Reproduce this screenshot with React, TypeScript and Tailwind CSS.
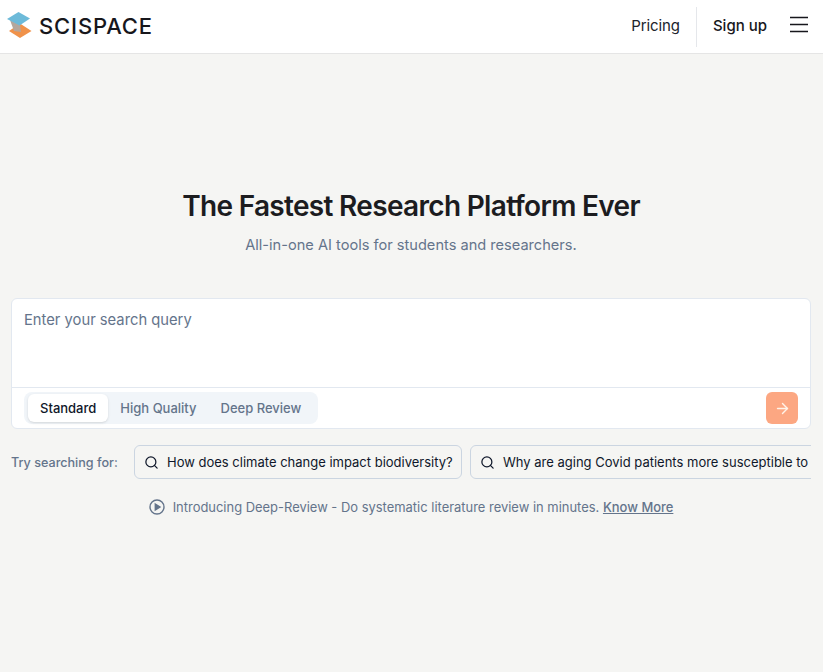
import { ArrowRight, Search } from "lucide-react";

const chips = [
  { text: "How does climate change impact biodiversity?", width: "w-[328px]" },
  { text: "Why are aging Covid patients more susceptible to", width: "w-[420px]" },
];

function Logo() {
  return (
    <svg width="25" height="27" viewBox="0 0 25 27" className="shrink-0 mb-[2px]">
      <path d="M13 11.5 L24.5 19 L13 26 L2 19 Z" fill="#f0924a" />
      <path d="M3 8 L13 13 L14 20 L7 19 Z" fill="#b5a79d" />
      <path d="M11.5 0 L23 6.5 L12.5 13.5 L0 7 Z" fill="#6dbad9" />
    </svg>
  );
}

export default function App() {
  return (
    <div className="min-h-[672px] bg-[#f5f5f3] font-['Inter','Liberation_Sans',sans-serif] overflow-hidden">
      <header className="h-[54px] bg-white border-b border-[#e5e5e5] flex items-center pl-[7px] pr-[15px]">
        <Logo />
        <span className="ml-[7px] text-[22px] font-medium tracking-[0.85px] text-[#17171c]">SCISPACE</span>
        <div className="ml-auto flex items-center h-full">
          <a className="text-[15px] tracking-[-0.1px] text-[#20242c] mr-4">Pricing</a>
          <div className="w-px h-10 bg-[#e5e7eb]" />
          <a className="text-[15px] font-medium text-[#17171c] ml-4 mr-[23px]">Sign up</a>
          <svg width="18" height="17" viewBox="0 0 18 17" fill="none" stroke="#17171c" strokeWidth="1.6" className="mb-[4px]">
            <path d="M0 1.5 H18 M0 8.5 H18 M0 15.5 H18" />
          </svg>
        </div>
      </header>

      <main className="pt-[132px] pl-[11px] pr-[12px]">
        <h1 className="text-center text-[28px] leading-10 font-semibold text-[#1c1c1f] tracking-[-0.68px]">
          The Fastest Research Platform Ever
        </h1>
        <p className="mt-[9px] text-center text-[14.6px] leading-5 text-[#64748b]">
          All-in-one AI tools for students and researchers.
        </p>

        <div className="mt-[43px] bg-white border border-[#e2e8f0] rounded-md">
          <div className="h-[88px] px-3 pt-[11px] text-[14.75px] leading-5 text-[#64748b]">Enter your search query</div>
          <div className="h-[41px] border-t border-[#e2e8f0] flex items-center justify-between pl-[12px] pr-[12px]">
            <div className="h-8 bg-[#f1f5f9] rounded-lg flex items-center pl-[4px] pr-[5px] text-[13px]">
              <span className="h-[28px] px-3 pt-px flex items-center bg-white rounded-md shadow-sm text-[#0f172a] font-medium">Standard</span>
              <span className="px-3 pt-[2px] text-[#64748b] font-medium">High Quality</span>
              <span className="px-3 pt-[2px] text-[#64748b] font-medium">Deep Review</span>
            </div>
            <button className="w-8 h-8 rounded-md bg-[#fca782] flex items-center justify-center">
              <ArrowRight className="w-[17px] h-[17px] text-[#fff3e8]" />
            </button>
          </div>
        </div>

        <div className="mt-4 flex items-center overflow-hidden w-[800px]">
          <span className="shrink-0 w-[123px] text-[12.6px] pt-[3px] font-medium text-[#64748b]">Try searching for:</span>
          <div className="flex gap-2">
            {chips.map((c) => (
              <div key={c.text} className={`${c.width} shrink-0 h-[34px] flex items-center gap-[8px] pl-[9px] rounded-md border border-[#cbd5e1] whitespace-nowrap`}>
                <Search className="w-[15px] h-[15px] text-[#0f172a] shrink-0" />
                <span className="text-[13px] pt-px text-[#0f172a]">{c.text}</span>
              </div>
            ))}
          </div>
        </div>

        <div className="mt-[18px] flex items-center justify-center gap-2 text-[12.95px] text-[#64748b]">
          <svg width="16" height="16" viewBox="0 0 16 16" fill="none" stroke="#64748b" strokeWidth="1.4">
            <circle cx="8" cy="8" r="7" />
            <path d="M6.3 5 L11 8 L6.3 11 Z" fill="#64748b" />
          </svg>
          <span className="pt-px">
            Introducing Deep-Review - Do systematic literature review in minutes. <u className="font-medium">Know More</u>
          </span>
        </div>
      </main>
    </div>
  );
}
